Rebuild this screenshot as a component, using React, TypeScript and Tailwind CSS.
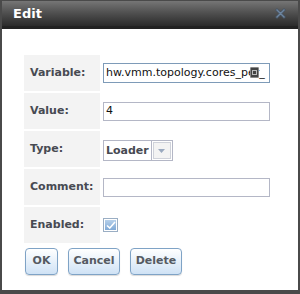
import React from 'react'

const font = { fontFamily: '"DejaVu Sans", Verdana, sans-serif' }

function Row({ label, children }: { label: string; children: React.ReactNode }) {
  return (
    <tr className="h-[36px]">
      <td className="w-[76px] bg-[#f3f3f3] pl-[6px] text-[11px] font-bold text-[#474a52] align-middle">
        {label}
      </td>
      <td className="pl-[1px] align-middle">{children}</td>
    </tr>
  )
}

function Button({ children, w }: { children: React.ReactNode; w: string }) {
  return (
    <button
      className={`${w} h-[27px] rounded-[4px] border border-[#7fa3c6] bg-gradient-to-b from-[#ffffff] to-[#cfe2f5] text-[11px] font-bold text-[#555a62] shadow-[0_1px_1px_rgba(0,0,0,0.15)]`}
    >
      {children}
    </button>
  )
}

export default function App() {
  return (
    <div className="w-[300px] h-[294px] bg-[#4a4a4a] p-[2px] pt-[1px]" style={font}>
      <div className="flex h-[28px] items-center justify-between bg-gradient-to-b from-[#767676] via-[#4e4e4e] to-[#2b2b2b] border-b-[3px] border-[#222] pl-[11px] pr-[12px]">
        <span className="text-[13px] font-bold text-white">Edit</span>
        <svg width="11" height="11" viewBox="0 0 11 11">
          <path
            d="M0.5 2 L2 0.5 L5.5 4 L9 0.5 L10.5 2 L7 5.5 L10.5 9 L9 10.5 L5.5 7 L2 10.5 L0.5 9 L4 5.5 Z"
            fill="#6d849e"
            stroke="#3f4d5c"
            strokeWidth="0.8"
          />
        </svg>
      </div>
      <div className="h-[261px] bg-white pl-[20px] pt-[24px]">
        <table className="border-separate border-spacing-[2px]">
          <tbody>
            <Row label="Variable:">
              <div className="relative flex h-[20px] w-[167px] items-center overflow-hidden border border-[#7e9bb8] bg-white pl-[2px]">
                <span className="whitespace-nowrap text-[11px] text-[#111]">hw.vmm.topology.cores_per_</span>
                <span className="absolute right-[10px] top-[3px] flex h-[11px] w-[9px] items-center justify-center rounded-[1px] bg-[#444] border border-[#888]">
                  <span className="h-[5px] w-[5px] border border-[#bbb]" />
                </span>
              </div>
            </Row>
            <Row label="Value:">
              <div className="flex h-[19px] w-[167px] items-center border border-[#b4b7c6] bg-white pl-[2px] text-[11px] text-[#111]">
                4
              </div>
            </Row>
            <Row label="Type:">
              <div className="inline-flex h-[21px] items-center border border-[#b4b7c6] bg-white">
                <span className="shrink-0 whitespace-nowrap px-[2px] text-[11px] font-bold text-[#474a52]">Loader</span>
                <span className="h-full w-px bg-[#b4b7c6]" />
                <span className="mx-[1px] flex h-[17px] w-[18px] items-center justify-center border border-[#cfd2da] bg-[#f3f3f3]">
                  <svg width="7" height="4" viewBox="0 0 7 4">
                    <path d="M0 0 H7 L3.5 4 Z" fill="#9aa9bf" />
                  </svg>
                </span>
              </div>
            </Row>
            <Row label="Comment:">
              <div className="h-[19px] w-[167px] border border-[#b4b7c6] bg-white" />
            </Row>
            <Row label="Enabled:">
              <div className="flex h-[14px] w-[15px] items-center justify-center border border-[#9aaec4] bg-white p-px">
                <div className="flex h-full w-full items-center justify-center bg-gradient-to-b from-[#b6d0ea] to-[#7fa9d6]">
                  <svg width="10" height="8" viewBox="0 0 10 8">
                    <path d="M1 4.5 L3.8 7 L9 1" stroke="white" strokeWidth="1.6" fill="none" />
                  </svg>
                </div>
              </div>
            </Row>
          </tbody>
        </table>
        <div className="mt-[3px] ml-[3px] flex gap-[10px]">
          <Button w="w-[33px]">OK</Button>
          <Button w="w-[52px]">Cancel</Button>
          <Button w="w-[52px]">Delete</Button>
        </div>
      </div>
    </div>
  )
}
